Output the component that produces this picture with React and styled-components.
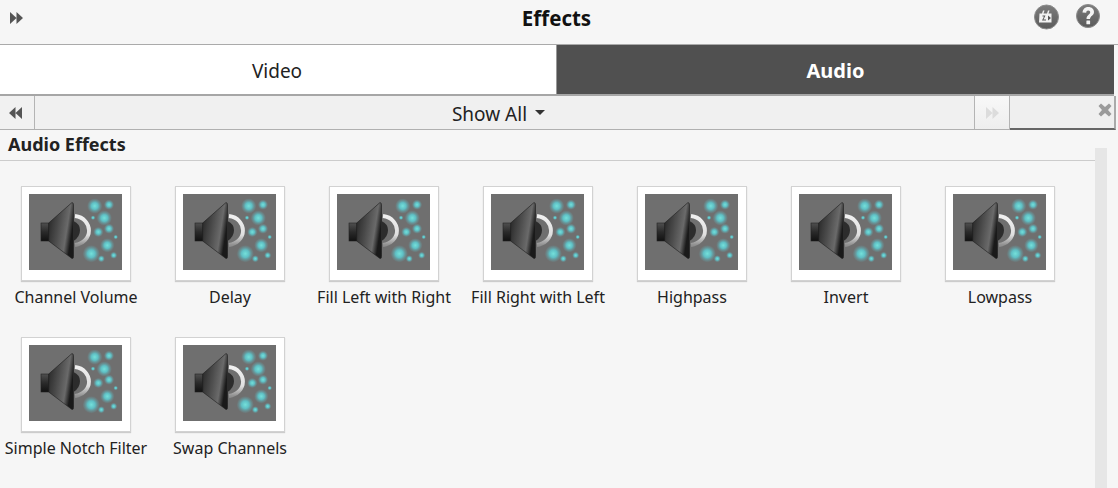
import React from "react";
import styled, { createGlobalStyle } from "styled-components";

const Global = createGlobalStyle`
  html, body { margin: 0; padding: 0; background: #f5f5f5; }
  body { font-family: "Noto Sans", "Open Sans", sans-serif; color: #1c1c1c; }
  * { box-sizing: border-box; }
`;
const Page = styled.div`width: 1118px; height: 488px; overflow: hidden; display: flex; flex-direction: column; background: #f6f6f6;`;
const Header = styled.header`
  height: 45px; flex: none; display: flex; align-items: center; justify-content: space-between;
  padding: 0 18px 9px 10px; border-bottom: 1px solid #aaa; position: relative;
`;
const Title = styled.h1`
  position: absolute; left: 0; right: 0; top: 5px; margin: 0; text-align: center; font-size: 20.5px; line-height: 26px; font-weight: 700; color: #111; padding-right: 5px;
`;
const HeadIcons = styled.div`display: flex; gap: 17px; align-items: flex-start; margin-top: -2px;`;
const Tabs = styled.div`height: 51px; flex: none; display: flex; width: 1114px; border-bottom: 2px solid #a6a6a6;`;
const Tab = styled.div`
  display: flex; align-items: center; justify-content: center;
  width: ${p => p.$w}px; font-size: ${p => p.$active ? 20 : 19}px; padding: ${p => p.$active ? "1px 0 0" : "3px 2px 0 0"};
  background: ${p => p.$active ? "#505050" : "#fff"};
  color: ${p => p.$active ? "#fff" : "#222"};
  font-weight: ${p => p.$active ? 700 : 400};
  border-left: ${p => p.$active ? "1px solid #999" : "none"};
`;
const Toolbar = styled.div`
  height: 34px; flex: none; display: flex; width: 1116px; background: #f0f0f0; border-bottom: 1px solid #b0b0b0;
`;
const NavBtn = styled.div`
  width: ${p => p.$w}px; flex: none; display: flex; align-items: center; justify-content: center;
  padding-right: ${p => p.$light ? 0 : 3}px;
  background: ${p => p.$light ? "linear-gradient(#f8f8f8,#eee)" : "#f1f1f1"};
  border-right: 1px solid #b4b4b4;
  ${p => p.$light && "border-left: 1px solid #b4b4b4;"}
`;
const Filter = styled.div`
  flex: 1; display: flex; align-items: center; justify-content: center; gap: 8px; font-size: 19px; color: #222; padding: 3px 12px 0 0;
`;
const Caret = styled.span`width: 0; height: 0; border-left: 5px solid transparent; border-right: 5px solid transparent; border-top: 5px solid #333; margin-top: -4px;`;
const Search = styled.div`
  width: 106px; flex: none; display: flex; justify-content: flex-end; padding: 7px 2px 0 0; background: #efefef;
  border-bottom: 2px solid #666; margin-bottom: -1px; border-right: 2px solid #aaa;
`;
const Content = styled.div`flex: 1; display: flex; position: relative; min-height: 0;`;
const Main = styled.div`flex: 1; min-width: 0;`;
const SectionTitle = styled.h2`
  margin: 0; height: 31px; padding: 0 0 0 8px; width: 1095px; font-size: 18px; line-height: 29px; font-weight: 700; color: #222; border-bottom: 1px solid #ccc;
`;
const Scrollbar = styled.div`position: absolute; right: 11px; top: 18px; bottom: 0; width: 12px; background: #e6e6e6;`;
const Grid = styled.div`display: grid; grid-template-columns: repeat(7, 154px); grid-auto-rows: 151px; padding: 25px 0 0 0;`;
const Item = styled.div`display: flex; flex-direction: column; align-items: center; width: 152px;`;
const Thumb = styled.div`
  width: 110px; height: 95px; background: #fff; border: 1px solid #d2d2d2; box-shadow: 0 1px 1px #ccc; display: flex; justify-content: flex-start; padding: 7px 0 0 7px;
`;
const Label = styled.div`font-size: 16px; line-height: 20px; margin-top: 6px; white-space: nowrap; color: #222;`;

const Double = ({ dir = "right", color = "#555" }) => (
  <svg width="13" height="12" viewBox="0 0 13 12">
    <path d={dir === "right" ? "M0 0 L6.500 6 L0 12Z M6.500 0 L13 6 L6.500 12Z" : "M13 0 L6.500 6 L13 12Z M6.500 0 L0 6 L6.500 12Z"} fill={color} />
  </svg>
);
const FilmIcon = () => (
  <svg width="25" height="26" viewBox="0 0 25 26">
    <defs><linearGradient id="fg" x1="0" y1="0" x2="0" y2="1"><stop offset="0" stopColor="#7d7d7d" /><stop offset="1" stopColor="#5a5a5a" /></linearGradient></defs>
    <circle cx="12.500" cy="13" r="12" fill="url(#fg)" stroke="#8c8c8c" />
    <path d="M5.500 9.500 h2.500 l1-3 h1.500 l-1 3 h3.500 l1-3 h1.500 l-1 3 h3 v9 h-12.500z" fill="#f2f2f2" />
    <path d="M8.500 11.500 h3 l-2 4 h2.500 v1 h-4 l2-4 h-1.500z M14 11.500 l3 2.500 -3 2.500z" fill="#555" />
  </svg>
);
const HelpIcon = () => (
  <svg width="24" height="24" viewBox="0 0 24 24">
    <defs><linearGradient id="hg" x1="0" y1="0" x2="0" y2="1"><stop offset="0" stopColor="#7d7d7d" /><stop offset="1" stopColor="#5a5a5a" /></linearGradient></defs>
    <circle cx="12" cy="12" r="11.500" fill="url(#hg)" stroke="#8c8c8c" />
    <path d="M6.500 8.500 C6.800 4.800 9.500 3 12.300 3 C15.800 3 18 5.200 18 7.900 C18 11.400 14 11.800 14 15 H10.500 C10.500 11 14.200 10.600 14.200 8.300 C14.200 7.200 13.400 6.500 12.200 6.500 C11 6.500 10.300 7.400 10.200 8.800 Z" fill="#f4f4f4" />
    <rect x="10.400" y="16.500" width="3.700" height="3.700" rx="0.5" fill="#f4f4f4" />
  </svg>
);
const dots = [[65.700,12,7.500],[80,10.700,5],[64,23.700,2.300],[75.300,24,7.500],[86.700,43,2.300],[69.300,38,5],[80,34.700,5],[78.300,51.300,7],[62.300,59.700,8.500],[72.300,64.700,3.500],[84.700,61.300,3.500]];
const SpeakerArt = ({ id }) => (
  <svg width="93" height="76" viewBox="0 0 93 76">
    <defs>
      <linearGradient id={`c${id}`} x1="0" y1="0" x2="1" y2="0.35"><stop offset="0" stopColor="#222" /><stop offset="0.45" stopColor="#4a4a4a" /><stop offset="0.8" stopColor="#6a6a6a" /><stop offset="1" stopColor="#1a1a1a" /></linearGradient>
      <linearGradient id={`m${id}`} x1="0" y1="0" x2="0" y2="1"><stop offset="0" stopColor="#4f4f4f" /><stop offset="0.5" stopColor="#2a2a2a" /><stop offset="1" stopColor="#111" /></linearGradient>
      <linearGradient id={`r${id}`} x1="0" y1="0" x2="0" y2="1"><stop offset="0" stopColor="#f0f0f0" /><stop offset="0.65" stopColor="#e0e0e0" /><stop offset="1" stopColor="#8f8f8f" /></linearGradient>
      <radialGradient id={`d${id}`}><stop offset="0" stopColor="#74e0da" /><stop offset="0.45" stopColor="#5fbfc4" /><stop offset="1" stopColor="#66999f" stopOpacity="0.1" /></radialGradient>
    </defs>
    <rect width="93" height="76" fill="#6f6f6f" />
    <rect x="12" y="29" width="8" height="18" fill={`url(#m${id})`} stroke="#222" strokeWidth="0.6" />
    <path d="M19.700 29 L43 8.500 Q44.500 8.500 44.500 11 V62 Q44.500 65 43 64.500 L19.700 47Z" fill={`url(#c${id})`} stroke="#1c1c1c" strokeWidth="0.6" />
    <path d="M44.500 27 Q51 30 51 36 Q51 43 44.500 47Z" fill="#2c2c2c" />
    <path d="M46 22 C55 23 60 30 60 36.500 C60 44 54 50 46 51" fill="none" stroke={`url(#r${id})`} strokeWidth="3.800" />
    {dots.map(([x, y, r], i) => <circle key={i} cx={x} cy={y} r={r} fill={`url(#d${id})`} />)}
  </svg>
);

const effects = ["Channel Volume","Delay","Fill Left with Right","Fill Right with Left","Highpass","Invert","Lowpass","Simple Notch Filter","Swap Channels"];

export default function App() {
  return (
    <Page>
      <Global />
      <Header>
        <Double dir="right" />
        <Title>Effects</Title>
        <HeadIcons><FilmIcon /><HelpIcon /></HeadIcons>
      </Header>
      <Tabs>
        <Tab $w={556}>Video</Tab>
        <Tab $w={558} $active>Audio</Tab>
      </Tabs>
      <Toolbar>
        <NavBtn $w={35}><Double dir="left" /></NavBtn>
        <Filter>Show All<Caret /></Filter>
        <NavBtn $w={36} $light><Double dir="right" color="#dcdcdc" /></NavBtn>
        <Search>
          <svg width="14" height="14" viewBox="0 0 14 14"><path d="M3 0.500 L7 4 L11 0.500 L13.500 3 L10 7 L13.500 11 L11 13.500 L7 10 L3 13.500 L0.500 11 L4 7 L0.500 3Z" fill="#9a9a9a" /></svg>
        </Search>
      </Toolbar>
      <Content>
        <Main>
          <SectionTitle>Audio Effects</SectionTitle>
          <Grid>
            {effects.map((name, i) => (
              <Item key={name}>
                <Thumb><SpeakerArt id={i} /></Thumb>
                <Label>{name}</Label>
              </Item>
            ))}
          </Grid>
        </Main>
        <Scrollbar />
      </Content>
    </Page>
  );
}
